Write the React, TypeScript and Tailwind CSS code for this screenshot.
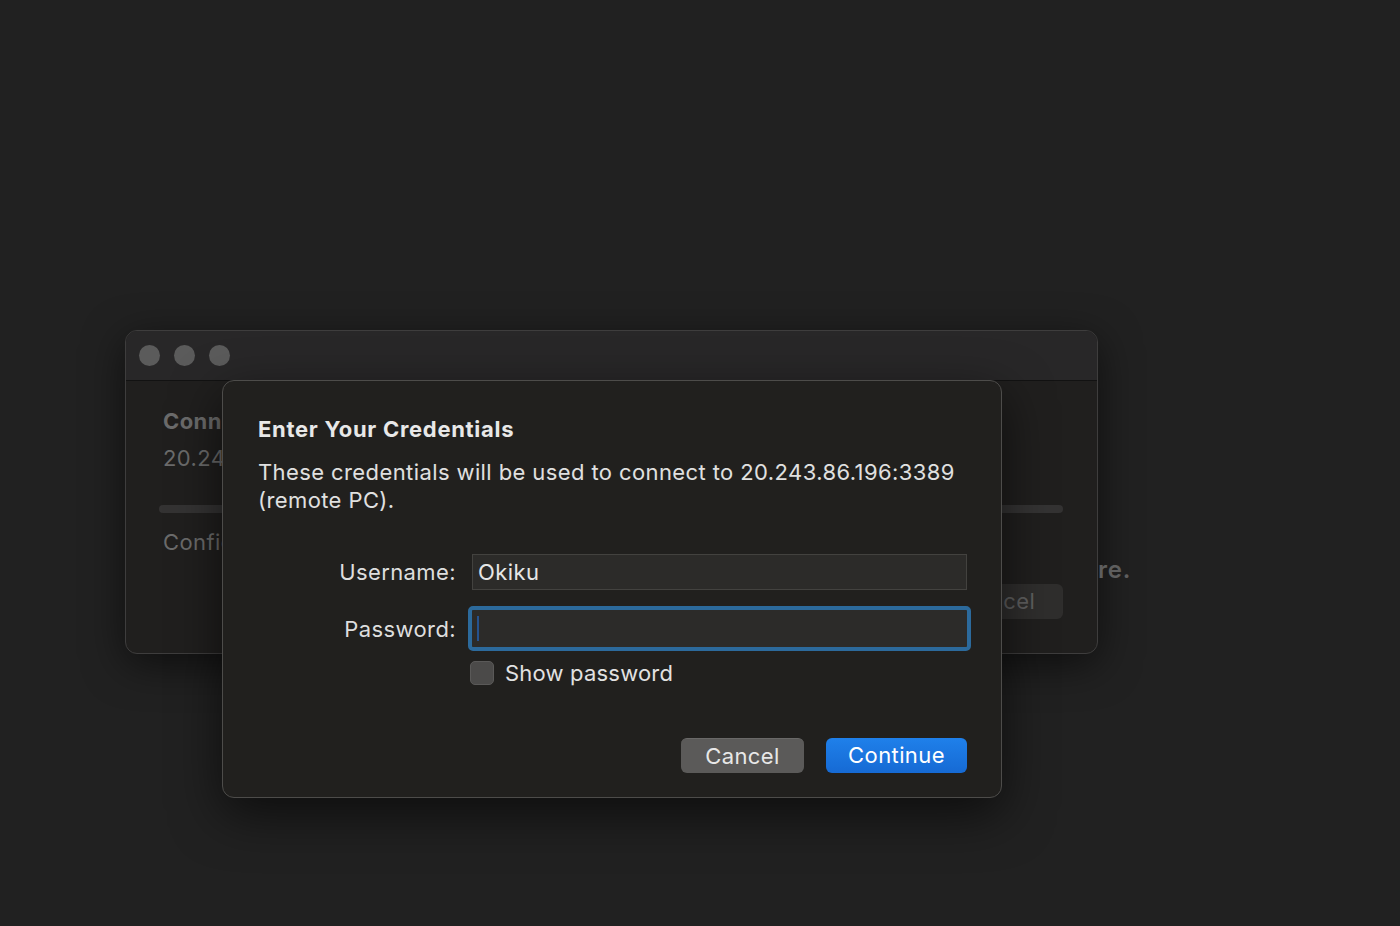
export default function App() {
  return (
    <div
      className="relative w-[1400px] h-[926px] overflow-hidden bg-[#212121] text-[#e4e4e4] tracking-[0.4px]"
      style={{ fontFamily: 'Inter, "Noto Sans", sans-serif' }}
    >
      {/* back window */}
      <div className="absolute left-[125px] top-[330px] w-[973px] h-[324px] rounded-[12px] border border-[#3e3d3d] bg-[#201f1e] shadow-[0_10px_40px_rgba(0,0,0,0.55)] overflow-hidden">
        <div className="h-[50px] flex items-center gap-[14px] pl-[13px] pb-[1px] bg-[#282728] border-b border-[#121212]">
          <span className="w-[21px] h-[21px] rounded-full bg-[#5b5b5b]" />
          <span className="w-[21px] h-[21px] rounded-full bg-[#5b5b5b]" />
          <span className="w-[21px] h-[21px] rounded-full bg-[#5b5b5b]" />
        </div>
        <div className="pl-[37px] pr-[34px] pt-[26px] text-[#6b6b6b]">
          <div className="text-[22px] leading-[28px] font-bold">Connecting to remote PC</div>
          <div className="mt-[9px] text-[22px] leading-[28px]">20.243.86.196:3389</div>
          <div className="mt-[33px] -ml-[4px] h-[8px] rounded-full bg-[#343333]" />
          <div className="mt-[15px] text-[22px] leading-[28px]">Configuring remote PC...</div>
          <div className="mt-[28px] flex justify-end">
            <div className="w-[130px] h-[35px] rounded-[6px] bg-[#2f2e2d] flex items-center justify-center text-[22px] text-[#5f5f5f]">
              Cancel
            </div>
          </div>
        </div>
      </div>

      <div className="absolute left-[1098px] top-[555px] text-[24px] leading-[30px] font-semibold tracking-[0.8px] text-[#5e5e5e]">
        re.
      </div>

      {/* credentials sheet */}
      <div className="absolute left-[222px] top-[380px] w-[780px] h-[418px] rounded-[12px] border border-[#4d4c4a] bg-[#21201e] shadow-[0_16px_50px_rgba(0,0,0,0.6)] pl-[35px] pr-[30px] pt-[34px]">
        <h1 className="text-[22px] leading-[28px] font-bold tracking-[0.7px] text-[#e8e8e8]">Enter Your Credentials</h1>
        <p className="mt-[15px] text-[22px] leading-[28px] text-[#e0e0e0]">
          These credentials will be used to connect to 20.243.86.196:3389
          <br />
          (remote PC).
        </p>

        <div className="mt-[40px] grid grid-cols-[198px_495px] gap-x-[16px] items-center">
          <label className="text-right text-[22px] leading-[28px] text-[#dedede]">Username:</label>
          <div className="h-[36px] bg-[#2c2b29] border border-[#43423f] flex items-center pl-[5px] text-[22px] text-[#e6e6e6]">
            Okiku
          </div>

          <label className="mt-[20px] text-right text-[22px] leading-[28px] text-[#dedede]">Password:</label>
          <div className="mt-[20px] h-[37px] bg-[#2c2b29] rounded-[1px] outline-[4px] outline-solid outline-[#2c6a9c] flex items-center pl-[5px]">
            <span className="w-[2px] h-[25px] bg-[#25528e]" />
          </div>

          <div />
          <div className="mt-[12px] flex items-center gap-[11px] -ml-[2px]">
            <span className="w-[24px] h-[24px] rounded-[5px] bg-[#4b4a49] border border-[#5a5958]" />
            <span className="text-[22px] leading-[28px] tracking-[0.2px] text-[#e2e2e2]">Show password</span>
          </div>
        </div>

        <div className="mt-[51px] flex justify-end gap-[22px] pr-[4px]">
          <button className="w-[123px] h-[35px] rounded-[6px] bg-[#5b5a59] border-t border-[#6a6968] text-[22px] text-[#e8e8e8] flex items-center justify-center">
            Cancel
          </button>
          <button className="w-[141px] h-[35px] rounded-[6px] bg-gradient-to-b from-[#1f80ea] to-[#166ad4] text-[22px] text-white flex items-center justify-center">
            Continue
          </button>
        </div>
      </div>
    </div>
  );
}
